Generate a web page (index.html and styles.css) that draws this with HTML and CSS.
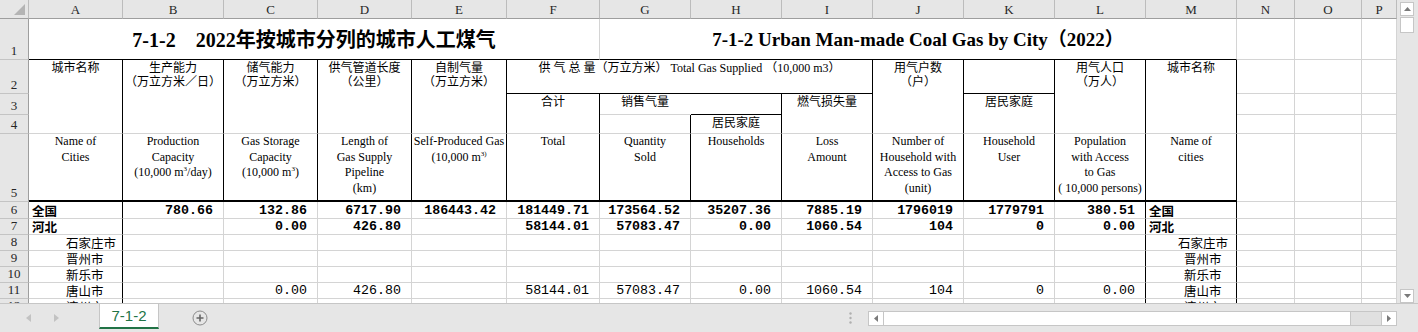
FILE: index.html
```html
<!DOCTYPE html>
<html lang="zh-CN">
<head>
  <meta charset="UTF-8">
  <meta name="viewport" content="width=device-width, initial-scale=1.0">
  <title>7-1-2 2022年按城市分列的城市人工煤气</title>
  <link rel="stylesheet" href="styles.css">
</head>
<body>
  <div class="window">
    <div class="workspace">
      <div class="sheet">
        <table class="grid">
          <colgroup>
            <col class="c-rh">
            <col class="c-a">
            <col class="c-b">
            <col class="c-cd">
            <col class="c-cd">
            <col class="c-e">
            <col class="c-f">
            <col class="c-std">
            <col class="c-std">
            <col class="c-std">
            <col class="c-std">
            <col class="c-std">
            <col class="c-std">
            <col class="c-std">
            <col class="c-n">
            <col class="c-o">
            <col class="c-p">
          </colgroup>
          <thead>
            <tr class="r-head">
              <th class="corner"><svg width="11" height="11" viewBox="0 0 11 11"><path d="M11 0V11H0Z" fill="#b4b4b4"/></svg></th>
              <th>A</th><th>B</th><th>C</th><th>D</th><th>E</th><th>F</th><th>G</th><th>H</th>
              <th>I</th><th>J</th><th>K</th><th>L</th><th>M</th><th>N</th><th>O</th><th>P</th>
            </tr>
          </thead>
          <tbody>
            <tr class="r1">
              <th class="rh">1</th>
              <td colspan="6" class="title bk-b">7-1-2&nbsp;&nbsp;&nbsp;&nbsp;2022年按城市分列的城市人工煤气</td>
              <td colspan="7" class="title title-en bk-b">7-1-2 Urban Man-made Coal Gas by City（2022）</td>
              <td></td><td></td><td></td>
            </tr>
            <tr class="r2">
              <th class="rh">2</th>
              <td rowspan="3" class="hd bk-r">城市名称</td>
              <td rowspan="3" class="hd bk-r">生产能力<br>（万立方米／日）</td>
              <td rowspan="3" class="hd bk-r">储气能力<br>（万立方米）</td>
              <td rowspan="3" class="hd bk-r">供气管道长度<br>（公里）</td>
              <td rowspan="3" class="hd bk-r">自制气量<br>（万立方米）</td>
              <td colspan="4" class="hd bk-r bk-b">供 气 总 量（万立方米） Total Gas Supplied （10,000 m3）</td>
              <td rowspan="3" class="hd bk-r">用气户数<br>（户）</td>
              <td class="bk-r bk-b"></td>
              <td rowspan="3" class="hd bk-r">用气人口<br>（万人）</td>
              <td rowspan="3" class="hd bk-r">城市名称</td>
              <td></td><td></td><td></td>
            </tr>
            <tr class="r3">
              <th class="rh">3</th>
              <td rowspan="2" class="hd bk-r">合计</td>
              <td class="hd no-r">销售气量</td>
              <td class="bk-r bk-b"></td>
              <td rowspan="2" class="hd bk-r">燃气损失量</td>
              <td rowspan="2" class="hd bk-r">居民家庭</td>
              <td></td><td></td><td></td>
            </tr>
            <tr class="r4">
              <th class="rh">4</th>
              <td class="bk-r"></td>
              <td class="hd bk-r">居民家庭</td>
              <td></td><td></td><td></td>
            </tr>
            <tr class="r5">
              <th class="rh">5</th>
              <td class="en bk-r thick-b">Name of<br>Cities</td>
              <td class="en bk-r thick-b">Production<br>Capacity<br>(10,000 m<sup>3</sup>/day)</td>
              <td class="en bk-r thick-b">Gas Storage<br>Capacity<br>(10,000 m<sup>3</sup>)</td>
              <td class="en bk-r thick-b">Length of<br>Gas Supply<br>Pipeline<br>(km)</td>
              <td class="en bk-r thick-b">Self-Produced Gas<br>(10,000 m<sup>3)</sup></td>
              <td class="en bk-r thick-b">Total</td>
              <td class="en bk-r thick-b">Quantity<br>Sold</td>
              <td class="en bk-r thick-b">Households</td>
              <td class="en bk-r thick-b">Loss<br>Amount</td>
              <td class="en bk-r thick-b">Number of<br>Household with<br>Access to Gas<br>(unit)</td>
              <td class="en bk-r thick-b">Household<br>User</td>
              <td class="en bk-r thick-b">Population<br>with Access<br>to Gas<br>( 10,000 persons)</td>
              <td class="en bk-r thick-b">Name of<br>cities</td>
              <td></td><td></td><td></td>
            </tr>
            <tr class="r6 total">
              <th class="rh">6</th>
              <td class="name region bk-r">全国</td>
              <td class="num">780.66</td>
              <td class="num">132.86</td>
              <td class="num">6717.90</td>
              <td class="num">186443.42</td>
              <td class="num">181449.71</td>
              <td class="num">173564.52</td>
              <td class="num">35207.36</td>
              <td class="num">7885.19</td>
              <td class="num">1796019</td>
              <td class="num">1779791</td>
              <td class="num bk-r">380.51</td>
              <td class="name region bk-r">全国</td>
              <td></td><td></td><td></td>
            </tr>
            <tr class="r-data total">
              <th class="rh">7</th>
              <td class="name region bk-r">河北</td>
              <td class="num"></td>
              <td class="num">0.00</td>
              <td class="num">426.80</td>
              <td class="num"></td>
              <td class="num">58144.01</td>
              <td class="num">57083.47</td>
              <td class="num">0.00</td>
              <td class="num">1060.54</td>
              <td class="num">104</td>
              <td class="num">0</td>
              <td class="num bk-r">0.00</td>
              <td class="name region bk-r">河北</td>
              <td></td><td></td><td></td>
            </tr>
            <tr class="r-data">
              <th class="rh">8</th>
              <td class="name city bk-r">石家庄市</td>
              <td></td><td></td><td></td><td></td><td></td><td></td><td></td><td></td><td></td><td></td>
              <td class="bk-r"></td>
              <td class="name city-m wide bk-r">石家庄市</td>
              <td></td><td></td><td></td>
            </tr>
            <tr class="r-data">
              <th class="rh">9</th>
              <td class="name city bk-r">晋州市</td>
              <td></td><td></td><td></td><td></td><td></td><td></td><td></td><td></td><td></td><td></td>
              <td class="bk-r"></td>
              <td class="name city-m bk-r">晋州市</td>
              <td></td><td></td><td></td>
            </tr>
            <tr class="r-data">
              <th class="rh">10</th>
              <td class="name city bk-r">新乐市</td>
              <td></td><td></td><td></td><td></td><td></td><td></td><td></td><td></td><td></td><td></td>
              <td class="bk-r"></td>
              <td class="name city-m bk-r">新乐市</td>
              <td></td><td></td><td></td>
            </tr>
            <tr class="r-data">
              <th class="rh">11</th>
              <td class="name city bk-r">唐山市</td>
              <td class="num"></td>
              <td class="num">0.00</td>
              <td class="num">426.80</td>
              <td class="num"></td>
              <td class="num">58144.01</td>
              <td class="num">57083.47</td>
              <td class="num">0.00</td>
              <td class="num">1060.54</td>
              <td class="num">104</td>
              <td class="num">0</td>
              <td class="num bk-r">0.00</td>
              <td class="name city-m bk-r">唐山市</td>
              <td></td><td></td><td></td>
            </tr>
            <tr class="r-data">
              <th class="rh">12</th>
              <td class="name city bk-r">滦州市</td>
              <td></td><td></td><td></td><td></td><td></td><td></td><td></td><td></td><td></td><td></td>
              <td class="bk-r"></td>
              <td class="name city-m bk-r">滦州市</td>
              <td></td><td></td><td></td>
            </tr>
          </tbody>
        </table>
      </div>

      <div class="vscroll">
        <span class="sb-btn"><svg width="7" height="4" viewBox="0 0 7 4"><path d="M0 4H7L3.5 0Z"/></svg></span>
        <span class="sb-thumb-v"></span>
        <span class="sb-fill"></span>
        <span class="sb-btn"><svg width="7" height="4" viewBox="0 0 7 4"><path d="M0 0H7L3.5 4Z"/></svg></span>
      </div>
    </div>

    <div class="tabbar">
      <div class="tab-nav">
        <svg width="5" height="8" viewBox="0 0 5 8"><path d="M5 0V8L0 4Z"/></svg>
        <svg width="5" height="8" viewBox="0 0 5 8"><path d="M0 0V8L5 4Z"/></svg>
      </div>
      <div class="tab active">7-1-2</div>
      <svg class="add-sheet" width="16" height="16" viewBox="0 0 16 16">
        <circle cx="8" cy="8" r="7" fill="none" stroke="#8c8c8c"/>
        <path d="M8 4.5V11.5M4.5 8H11.5" stroke="#666" stroke-width="1.6"/>
      </svg>
      <svg class="split-dots" width="3" height="12" viewBox="0 0 3 12">
        <circle cx="1.5" cy="1.5" r="1.2"/>
        <circle cx="1.5" cy="6" r="1.2"/>
        <circle cx="1.5" cy="10.5" r="1.2"/>
      </svg>
      <div class="hscroll">
        <span class="sb-btn"><svg width="4" height="7" viewBox="0 0 4 7"><path d="M4 0V7L0 3.5Z"/></svg></span>
        <span class="sb-thumb-h"></span>
        <span class="sb-track"></span>
        <span class="sb-btn"><svg width="4" height="7" viewBox="0 0 4 7"><path d="M0 0V7L4 3.5Z"/></svg></span>
      </div>
    </div>
  </div>
</body>
</html>
```

FILE: styles.css
```css
* {
  box-sizing: border-box;
}
body {
  margin: 0;
  background: #e6e6e6;
  font-family: "Noto Sans CJK SC", sans-serif;
  overflow: hidden;
}
.window {
  width: 1418px;
  height: 332px;
  display: flex;
  flex-direction: column;
}
.workspace {
  display: flex;
  gap: 3px;
  height: 303px;
}
.sheet {
  width: 1397px;
  height: 303px;
  overflow: hidden;
  background: #fff;
}

/* grid */
.grid {
  width: 1397px;
  table-layout: fixed;
  border-collapse: separate;
  border-spacing: 0;
}
.c-rh { width: 29px; }
.c-a { width: 94px; }
.c-b { width: 101px; }
.c-cd { width: 94px; }
.c-e { width: 95px; }
.c-f { width: 93px; }
.c-std { width: 91px; }
.c-n { width: 58px; }
.c-o { width: 67px; }
.c-p { width: 35px; }

.grid th,
.grid td {
  padding: 0;
  border-right: 1px solid #d4d4d4;
  border-bottom: 1px solid #d4d4d4;
  white-space: nowrap;
  color: #000;
}
.grid th {
  font-weight: normal;
}
.r-head { height: 19px; }
.r1 { height: 41px; }
.r2 { height: 34px; }
.r3 { height: 21px; }
.r4 { height: 19px; }
.r5 { height: 68px; }
.r6 { height: 17px; }
.r-data { height: 16px; }

.grid thead th {
  background: #e6e6e6;
  border-right-color: #bcbcbc;
  border-bottom-color: #9e9e9e;
  font: 13px/17px "Liberation Serif", serif;
  color: #262626;
  padding-top: 1px;
  text-align: center;
}
.grid thead th.corner {
  text-align: right;
  vertical-align: bottom;
  line-height: 0;
  padding: 0 3px 3px 0;
}
.grid th.rh {
  background: #e6e6e6;
  border-right-color: #9e9e9e;
  border-bottom-color: #c4c4c4;
  font: 13px/14px "Liberation Serif", serif;
  color: #262626;
  text-align: center;
  vertical-align: bottom;
  padding-bottom: 1px;
}

.bk-r { border-right-color: #000 !important; }
.bk-b { border-bottom-color: #000 !important; }
.no-r { border-right-color: transparent !important; }
.thick-b { border-bottom: 2px solid #000 !important; }

.title {
  font: bold 20px/24px "Liberation Serif", "Noto Sans CJK SC", serif;
  text-align: center;
  vertical-align: bottom;
  padding-bottom: 7px !important;
}
.title-en {
  font-size: 19px;
}
.hd {
  font: 12px/14px "Liberation Serif", "Noto Sans CJK SC", serif;
  text-align: center;
  vertical-align: top;
  padding-top: 1px !important;
}
.en {
  font: 12px/15.6px "Liberation Serif", serif;
  text-align: center;
  vertical-align: top;
}
.en sup {
  font-size: 7px;
  line-height: 0;
  vertical-align: 5px;
}

/* data rows */
.name {
  font: 12.5px/15px "Noto Sans CJK SC", sans-serif;
}
.region {
  padding-left: 3px !important;
}
.city {
  padding-left: 37px !important;
}
.city-m {
  padding-left: 38px !important;
}
.city-m.wide {
  padding-left: 32px !important;
}
.num {
  font: 13.3px/15px "Liberation Mono", monospace;
  text-align: right;
  padding-right: 10px !important;
}
.total .num,
.total .name {
  font-weight: bold;
}

/* scroll bars */
.vscroll {
  width: 18px;
  height: 303px;
  display: flex;
  flex-direction: column;
  padding: 2px 4px 0 0;
}
.sb-btn {
  display: flex;
  align-items: center;
  justify-content: center;
  width: 14px;
  height: 14px;
  background: #fff;
  border: 1px solid #c6c6c6;
  fill: #7a7a7a;
}
.sb-thumb-v {
  height: 16px;
  margin-top: 1px;
  background: #fff;
  border: 1px solid #c6c6c6;
}
.sb-fill {
  flex: 1;
}

/* sheet tabs */
.tabbar {
  display: flex;
  align-items: center;
  height: 29px;
  border-top: 1px solid #c6c6c6;
  padding: 0 21px 0 26px;
}
.tab-nav {
  display: flex;
  gap: 23px;
  fill: #c2c2c2;
}
.tab {
  align-self: flex-start;
  margin-left: 40px;
  width: 60px;
  height: 25px;
  background: #fff;
  border-left: 1px solid #c6c6c6;
  border-right: 1px solid #c6c6c6;
  border-bottom: 2px solid #217346;
  font: 15px/23px "Liberation Sans", sans-serif;
  color: #217346;
  text-align: center;
}
.add-sheet {
  margin-left: 33px;
}
.split-dots {
  margin-left: auto;
  margin-right: 16px;
  fill: #b0b0b0;
}
.hscroll {
  display: flex;
  width: 529px;
  height: 15px;
  border: 1px solid #c6c6c6;
  background: #e0e0e0;
}
.hscroll .sb-btn {
  width: 15px;
  height: 13px;
  border: none;
}
.hscroll .sb-btn:first-child {
  border-right: 1px solid #c6c6c6;
}
.hscroll .sb-btn:last-child {
  border-left: 1px solid #c6c6c6;
}
.sb-thumb-h {
  width: 467px;
  background: #fff;
  border-right: 1px solid #c6c6c6;
}
.sb-track {
  flex: 1;
}
```
